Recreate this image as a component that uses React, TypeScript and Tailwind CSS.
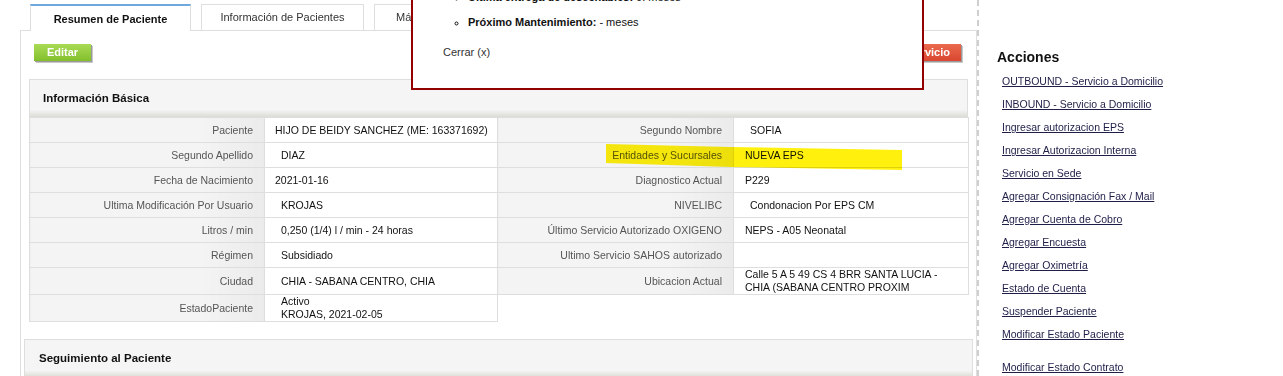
type Row = { label: string; value: React.ReactNode; indent?: boolean };

const leftRows: Row[] = [
  { label: 'Paciente', value: 'HIJO DE BEIDY SANCHEZ (ME: 163371692)' },
  { label: 'Segundo Apellido', value: 'DIAZ', indent: true },
  { label: 'Fecha de Nacimiento', value: '2021-01-16' },
  { label: 'Ultima Modificación Por Usuario', value: 'KROJAS', indent: true },
  { label: 'Litros / min', value: '0,250 (1/4) l / min - 24 horas', indent: true },
  { label: 'Régimen', value: 'Subsidiado', indent: true },
  { label: 'Ciudad', value: 'CHIA - SABANA CENTRO, CHIA', indent: true },
  {
    label: 'EstadoPaciente',
    value: (
      <>
        Activo
        <br />
        KROJAS, 2021-02-05
      </>
    ),
    indent: true,
  },
];

const rightRows: Row[] = [
  { label: 'Segundo Nombre', value: 'SOFIA', indent: true },
  { label: 'Entidades y Sucursales', value: 'NUEVA EPS' },
  { label: 'Diagnostico Actual', value: 'P229' },
  { label: 'NIVELIBC', value: 'Condonacion Por EPS CM', indent: true },
  { label: 'Último Servicio Autorizado OXIGENO', value: 'NEPS - A05 Neonatal' },
  { label: 'Ultimo Servicio SAHOS autorizado', value: '' },
  {
    label: 'Ubicacion Actual',
    value: (
      <>
        Calle 5 A 5 49 CS 4 BRR SANTA LUCIA -
        <br />
        CHIA (SABANA CENTRO PROXIM
      </>
    ),
  },
];

const acciones = [
  'OUTBOUND - Servicio a Domicilio',
  'INBOUND - Servicio a Domicilio',
  'Ingresar autorizacion EPS',
  'Ingresar Autorizacion Interna',
  'Servicio en Sede',
  'Agregar Consignación Fax / Mail',
  'Agregar Cuenta de Cobro',
  'Agregar Encuesta',
  'Agregar Oximetría',
  'Estado de Cuenta',
  'Suspender Paciente',
  'Modificar Estado Paciente',
];

const labelCell =
  'h-[25px] p-0 pr-[11px] text-right text-[#555] whitespace-nowrap border border-[#dedede] bg-[linear-gradient(to_right,#f4f4f4_72%,#ebebeb)] align-middle';
const valueCell =
  'h-[25px] p-0 text-left text-[#111] whitespace-nowrap border border-[#dedede] bg-white align-middle';

export default function App() {
  return (
    <div className="relative w-[1283px] h-[376px] overflow-hidden bg-white font-['Liberation_Sans',Arial,sans-serif] text-[11px] leading-[13px]">
      <div className="flex h-full">
        <main className="ml-[20px] w-[957px] pt-[4px] flex flex-col">
          <div className="flex items-start gap-[10px] ml-[10px] h-[26px] relative z-10">
            <div className="w-[161px] h-[27px] pt-px border-x border-[#dedede] border-t-2 border-t-[#6fa8dc] bg-white flex items-center justify-center font-bold text-[#111]">
              Resumen de Paciente
            </div>
            <div className="w-[163px] h-[26px] border-x border-t border-[#dedede] bg-white flex items-center justify-center text-[#333]">
              Información de Pacientes
            </div>
            <div className="w-[120px] h-[26px] border-x border-t border-[#dedede] bg-white flex items-center pl-[21px] text-[#333]">
              Más Información
            </div>
          </div>
          <div className="flex-1 border-x border-t border-[#dedede] flex flex-col">
            <div className="flex justify-between mt-[13px] ml-[13px] mr-[15px]">
              <button className="w-[57px] h-[17px] bg-[linear-gradient(to_bottom,#a9db55,#82bf2c)] shadow-[1px_1px_0_#9a9a9a,2px_2px_0_#c8c8c8] text-white font-bold text-[11px] leading-[17px]">
                Editar
              </button>
              <button className="h-[17px] px-[11px] bg-[linear-gradient(to_bottom,#ea6a4f,#d9472f)] shadow-[1px_1px_0_#9a9a9a,2px_2px_0_#c8c8c8] text-white font-bold text-[11px] leading-[17px]">
                Solicitar Servicio
              </button>
            </div>

            <section className="mt-[18px] mx-[8px]">
              <div className="h-[38px] pl-[13px] border-x border-t border-[#dedede] bg-[linear-gradient(to_bottom,#f5f5f5_0%,#f5f5f5_80%,#dcdcd5_100%)] flex items-center">
                <span className="font-bold text-[11.5px] text-[#111]">Información Básica</span>
              </div>
              <table className="border-collapse table-fixed w-[939px] text-[10.5px] leading-[13px]">
                <colgroup>
                  <col className="w-[235px]" />
                  <col className="w-[233px]" />
                  <col className="w-[236px]" />
                  <col className="w-[235px]" />
                </colgroup>
                <tbody>
                  {leftRows.map((l, i) => {
                    const r = rightRows[i];
                    return (
                      <tr key={l.label}>
                        <td className={labelCell}>{l.label}</td>
                        <td className={`${valueCell} ${l.indent ? 'pl-[16px]' : 'pl-[10px]'}`}>{l.value}</td>
                        {r && <td className={labelCell}>{r.label}</td>}
                        {r && (
                          <td className={`${valueCell} ${r.indent ? 'pl-[16px]' : 'pl-[11px]'}`}>{r.value}</td>
                        )}
                      </tr>
                    );
                  })}
                </tbody>
              </table>
            </section>

            <section className="mt-[17px] mx-[3px]">
              <div className="pl-[14px] h-[38px] border-x border-t border-[#dedede] bg-[linear-gradient(to_bottom,#f5f5f5_0%,#f5f5f5_82%,#dcdcd5_100%)] flex items-center">
                <span className="font-bold text-[11.5px] text-[#111]">Seguimiento al Paciente</span>
              </div>
            </section>
          </div>
        </main>

        <aside className="flex-1 border-l-2 border-dashed border-[#cfcfcf] pl-[18px] pt-[48px]">
          <h3 className="font-bold text-[14px] leading-[18px] text-[#111]">Acciones</h3>
          <ul className="mt-[8px] ml-[5px] flex flex-col gap-[9px] text-[10.5px]">
            {acciones.map((a) => (
              <li key={a} className="leading-[14px]">
                <a href="#" className="underline text-[#1e1e48]">
                  {a}
                </a>
              </li>
            ))}
            <li className="leading-[14px] mt-[10px]">
              <a href="#" className="underline text-[#1e1e48]">
                Modificar Estado Contrato
              </a>
            </li>
          </ul>
        </aside>
      </div>

      <div className="absolute left-[411px] top-[-32px] w-[513px] border-2 border-[#920000] bg-white pt-[20px] pb-[29px] pl-[30px] z-20">
        <ul className="list-[circle] pl-[25px] text-[#111] flex flex-col gap-[11px]">
          <li className="leading-[14px]">
            <b>Última entrega de desechables:</b> 0. meses
          </li>
          <li className="leading-[14px]">
            <b>Próximo Mantenimiento:</b> - meses
          </li>
        </ul>
        <div className="mt-[16px] leading-[14px] text-[#333]">Cerrar (x)</div>
      </div>

      <svg className="absolute left-0 top-0 mix-blend-multiply pointer-events-none" width="1283" height="376">
        <polygon points="606,144 730,147 902,150 902,170 730,167 606,163" fill="#fff000" opacity="0.95" />
      </svg>
    </div>
  );
}
